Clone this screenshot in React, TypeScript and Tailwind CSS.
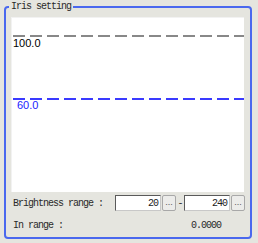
import React from "react";

function Spin({ value }: { value: string }) {
  return (
    <div className="flex items-center">
      <div className="w-[46px] h-[16px] bg-white border border-t-[#5a5a5a] border-l-[#5a5a5a] border-b-[#c8c8c8] border-r-[#c8c8c8] flex items-center justify-end pr-[2px] text-[#222]">
        {value}
      </div>
      <div className="w-[14px] h-[16px] ml-[1px] bg-[#ececea] border border-[#a8a8a8] rounded-[2px] flex items-center justify-center font-['Liberation_Sans',Arial,sans-serif] tracking-normal text-[9px] leading-none text-[#555] pb-[2px]">
        ...
      </div>
    </div>
  );
}

export default function App() {
  return (
    <div className="w-[258px] h-[243px] bg-[#e5e5df] overflow-hidden font-['Liberation_Mono',monospace] text-[10px] tracking-[-1px] text-[#2a2a2a]">
      <fieldset className="ml-[4px] w-[248px] h-[239px] border-2 border-[#4a68ee] rounded-[4px] px-[5px]">
        <legend className="ml-[-2px] px-[2px] h-[14px] leading-[14px]">Iris setting</legend>
        <div className="mt-[3px] w-[233px] h-[175px] bg-white border-l border-t border-[#f2f2f2] relative font-['Liberation_Sans',Arial,sans-serif] tracking-normal text-[11px] leading-[11px]">
          <svg className="absolute left-0 top-0" width="233" height="175">
            <line x1="1" y1="18" x2="232" y2="18" stroke="#888888" strokeWidth="2" strokeDasharray="12 5" />
            <line x1="1" y1="81" x2="232" y2="81" stroke="#3a3aff" strokeWidth="2" strokeDasharray="12 5" />
          </svg>
          <div className="absolute left-[1px] top-[20px] text-black">100.0</div>
          <div className="absolute left-[5px] top-[82px] text-[#1a1aff]">60.0</div>
        </div>
        <div className="mt-[3px] flex items-center pl-[2px]">
          <div className="w-[102px]">Brightness range :</div>
          <Spin value="20" />
          <div className="w-[8px] text-center text-[#333]">-</div>
          <Spin value="240" />
        </div>
        <div className="mt-[6px] flex items-center pl-[2px] h-[16px]">
          <div className="w-[178px]">In range :</div>
          <div>0.0000</div>
        </div>
      </fieldset>
    </div>
  );
}
